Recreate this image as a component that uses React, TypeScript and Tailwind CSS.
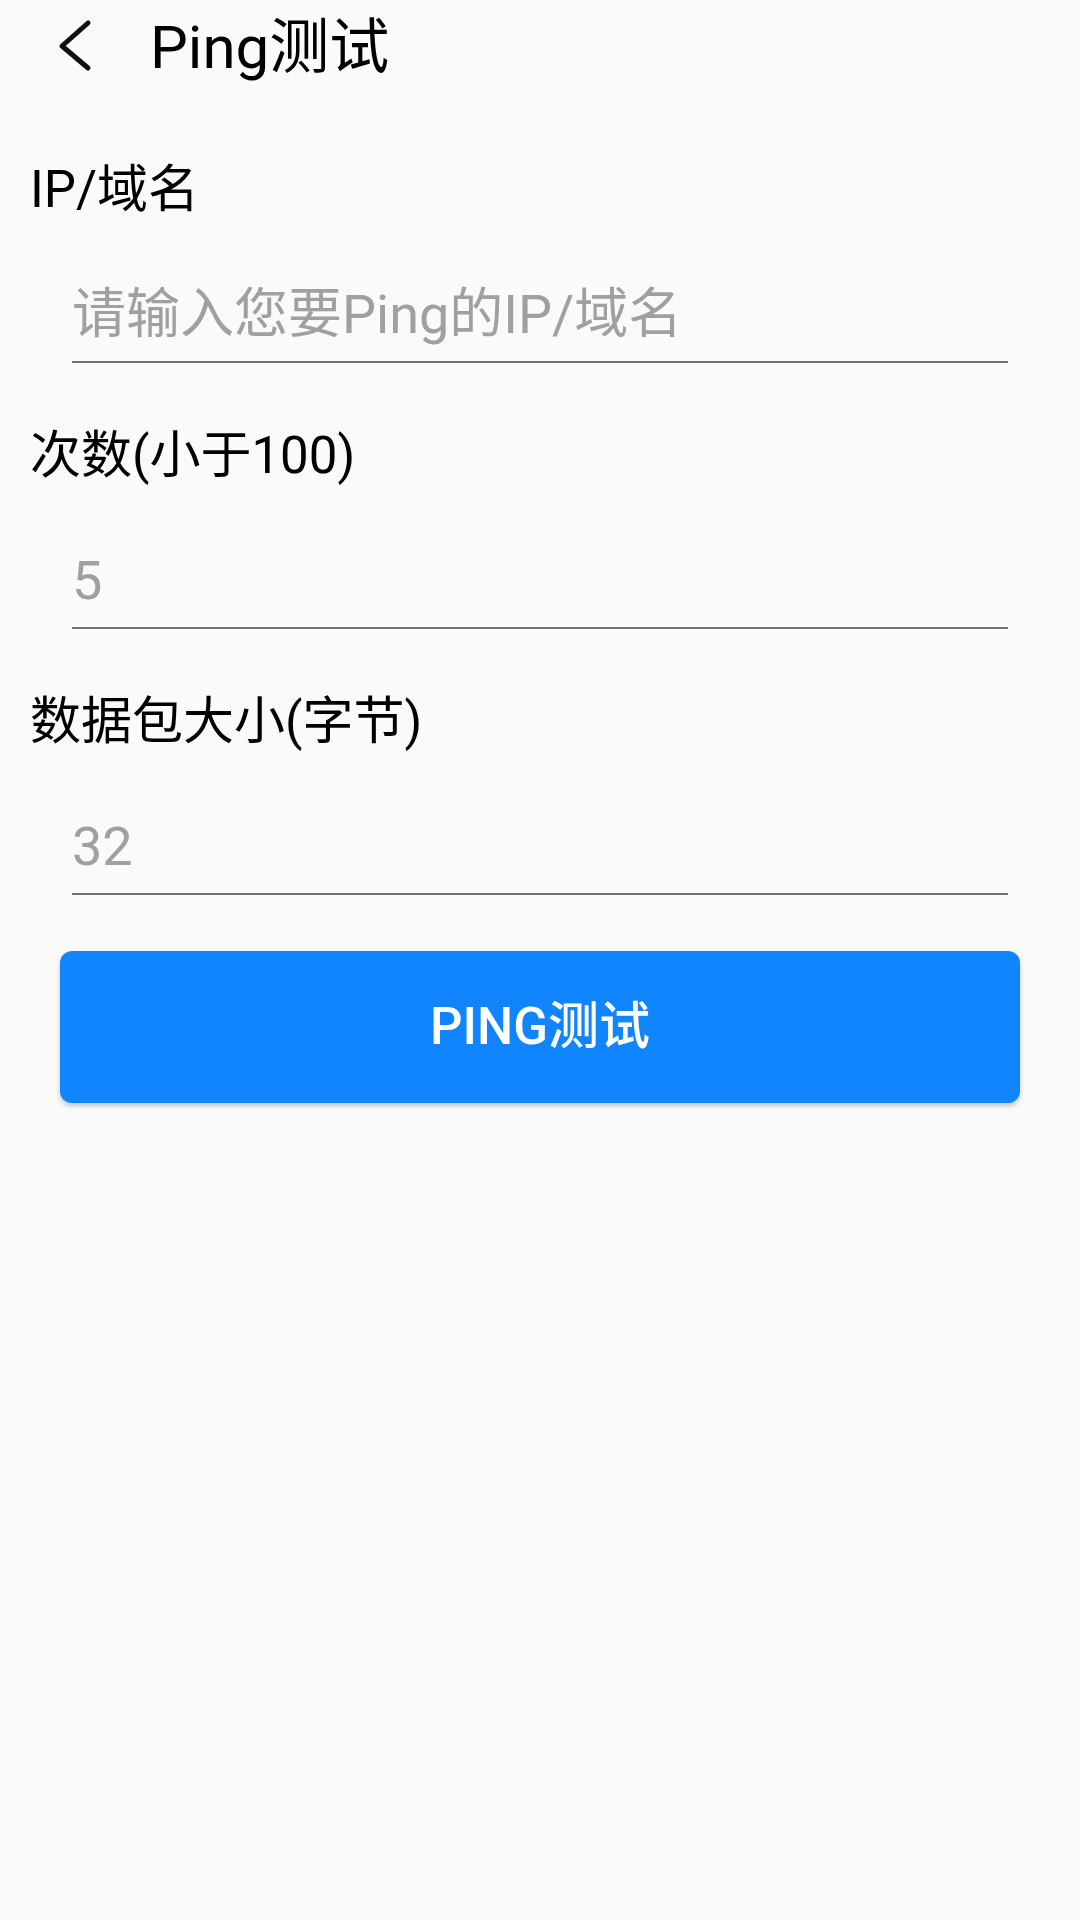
import { useState } from "react"

const font = { fontFamily: "Roboto, 'Noto Sans CJK SC', sans-serif" }

function Field({ label, hint, value, onChange }: { label: string; hint: string; value: string; onChange: (v: string) => void }) {
  return (
    <div className="flex flex-col">
      <label className="pl-[30px] text-[51px] leading-[60px] text-black">{label}</label>
      <input
        type="text"
        value={value}
        onChange={(e) => onChange(e.target.value)}
        placeholder={hint}
        className="mt-[43px] ml-[72px] mr-[72px] h-[100px] pt-[20px] pb-[16px] px-0 bg-transparent border-0 border-b-2 border-[#747474] text-[54px] leading-[62px] text-black placeholder:text-[#a0a0a0] outline-none"
      />
    </div>
  )
}

export default function App() {
  const [form, setForm] = useState({ host: "", count: "", size: "" })

  return (
    <div className="min-h-[1920px] w-[1080px] bg-[#fafafa]" style={font}>
      {/* Header */}
      <header className="flex items-start h-[98px]">
        <button className="ml-[52px] mt-[17px] w-[40px] h-[56px] flex items-center justify-center">
          <svg width="40" height="56" viewBox="0 0 40 56" fill="none">
            <path d="M36 6 L10 29 L36 51" stroke="#111" strokeWidth="5" strokeLinecap="round" strokeLinejoin="round" />
          </svg>
        </button>
        <h1 className="ml-[58px] mt-[13px] text-[60px] leading-[70px] text-black font-normal">Ping测试</h1>
      </header>

      <main className="mt-[62px] flex flex-col">
        <div className="flex flex-col gap-[63px]">
          <Field label="IP/域名" hint="请输入您要Ping的IP/域名" value={form.host} onChange={(v) => setForm({ ...form, host: v })} />
          <Field label="次数(小于100)" hint="5" value={form.count} onChange={(v) => setForm({ ...form, count: v })} />
          <Field label="数据包大小(字节)" hint="32" value={form.size} onChange={(v) => setForm({ ...form, size: v })} />
        </div>

        <button className="mt-[56px] ml-[60px] w-[960px] h-[152px] rounded-[12px] bg-[#1185fe] shadow-[0_3px_5px_rgba(0,0,0,0.22)] text-white text-[51px] font-medium flex items-center justify-center">
          PING测试
        </button>
      </main>
    </div>
  )
}
